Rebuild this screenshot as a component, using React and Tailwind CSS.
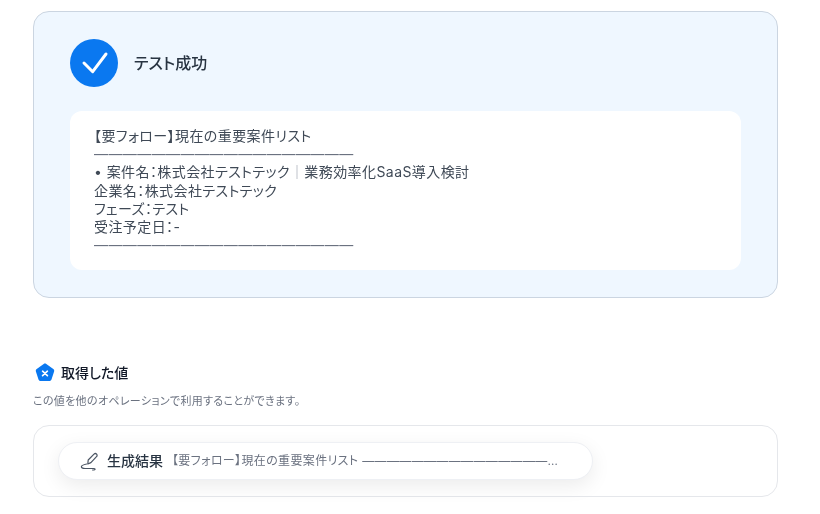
import React from 'react';

const rule = '――――――――――――――――――';
const shortRule = '―――――――――――――――';

function EditIcon() {
  return (
    <svg width="20" height="20" viewBox="0 0 20 20" fill="none" stroke="#4b5563" strokeWidth="1.2" strokeLinecap="round" strokeLinejoin="round">
      <path d="M8.8 13 9.2 9 15 3.2c.8-.8 1.9-.8 2.6-.1s.7 1.8-.1 2.6L11.9 11.6 8.8 13Z" />
      <path d="M7.6 13c-3 .6-5.2 1.4-5.2 2.8 0 1.4 1.6 1.7 3.6 1.7h8.6c1 0 1.5.3 1.5.7s-.5.8-2.5.8" />
    </svg>
  );
}

function ValueIcon() {
  return (
    <svg width="22" height="22" viewBox="0 0 22 22">
      <path d="M11 1.6c.5 0 .9.1 1.3.4l7 5.1c.8.6 1.1 1.5.8 2.4l-2.6 8c-.3.9-1.2 1.5-2.1 1.5H6.6c-1 0-1.8-.6-2.1-1.5l-2.6-8c-.3-.9 0-1.8.8-2.4l7-5.1c.4-.3.8-.4 1.3-.4Z" fill="#0a78f0" />
      <path d="M8.6 9.2 13.4 13.6M13.4 9.2 8.6 13.6" stroke="#fff" strokeWidth="1.7" strokeLinecap="round" />
    </svg>
  );
}

export default function App() {
  return (
    <div className="h-[514px] w-[820px] overflow-hidden bg-white pl-[33px] pr-[42px] pt-[11px] font-['Inter','Noto_Sans_CJK_JP',sans-serif] [font-feature-settings:'palt'] [will-change:transform]">
      {/* テスト結果 */}
      <div className="h-[287px] rounded-2xl border border-[#cbd5e1] bg-[#eff7ff] pl-[36px] pr-[36px] pt-[27px]">
        <div className="flex items-center gap-4">
          <div className="flex h-12 w-12 items-center justify-center rounded-full bg-[#0a78f0]">
            <svg width="48" height="48" viewBox="0 0 48 48" fill="none" stroke="#fff" strokeWidth="3" strokeLinecap="round" strokeLinejoin="round">
              <path d="M14 24 22.7 32.7 36 15" />
            </svg>
          </div>
          <span className="text-base font-medium text-[#283442]">テスト成功</span>
        </div>
        <div className="mt-6 h-[159px] rounded-xl bg-white px-6 pt-4 text-sm leading-[18.2px] tracking-[0.03em] text-[#3f4956]">
          <p>【要フォロー】現在の重要案件リスト</p>
          <p className="text-[#6b7280]">{rule}</p>
          <p>• 案件名：株式会社テストテック<span className="text-[#9ca3af]">｜</span>業務効率化SaaS導入検討</p>
          <p>企業名：株式会社テストテック</p>
          <p>フェーズ：テスト</p>
          <p>受注予定日：-</p>
          <p className="text-[#6b7280]">{rule}</p>
        </div>
      </div>

      {/* 取得した値 */}
      <div className="mt-[64px] flex items-center gap-[5px] pl-[1px]">
        <ValueIcon />
        <span className="text-sm font-medium text-[#111827]">取得した値</span>
      </div>
      <p className="mt-[10px] text-[11px] leading-[14px] tracking-[0.03em] text-[#6b7280]">この値を他のオペレーションで利用することができます。</p>
      <div className="mt-[17px] h-[72px] rounded-2xl border border-[#e5e7eb] bg-white pl-6 pt-4">
        <div className="flex h-[38px] w-[535px] items-center rounded-full border border-[#eef0f4] bg-white pl-5 shadow-[0_6px_20px_rgba(0,0,0,0.08)]">
          <EditIcon />
          <span className="ml-2 text-sm font-medium text-[#283442]">生成結果</span>
          <span className="ml-[9px] whitespace-nowrap text-xs tracking-[0.03em] text-[#6b7280]">【要フォロー】現在の重要案件リスト {shortRule}…</span>
        </div>
      </div>
    </div>
  );
}
